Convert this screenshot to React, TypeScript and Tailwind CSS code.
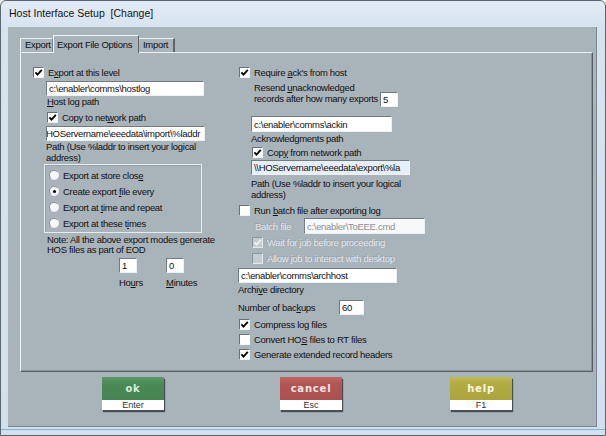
import React from "react";

const Cb = ({ on, dis }: { on?: boolean; dis?: boolean }) => (
  <span
    className={
      dis
        ? "relative block w-[11px] h-[11px] shrink-0 bg-[#c5ccd0] border border-t-[#8d969b] border-l-[#8d969b] border-b-[#e4e8ea] border-r-[#e4e8ea]"
        : "relative block w-[11px] h-[11px] shrink-0 bg-white border border-t-[#6a7277] border-l-[#6a7277] border-b-[#f2f4f5] border-r-[#f2f4f5]"
    }
  >
    {on && (
      <svg viewBox="0 0 9 9" className="absolute left-0 top-0 w-[9px] h-[9px]">
        <path d="M1.4 4.3 L3.5 6.6 L7.8 1.9" fill="none" stroke={dis ? "#eef1f2" : "#000"} strokeWidth="1.8" />
      </svg>
    )}
  </span>
);

const CbRow = ({
  on,
  dis,
  cls,
  children,
}: {
  on?: boolean;
  dis?: boolean;
  cls: string;
  children: React.ReactNode;
}) => (
  <div className={`flex items-center h-[12px] ${cls}`}>
    <Cb on={on} dis={dis} />
    <span
      className={
        dis
          ? "ml-[4px] whitespace-nowrap text-[#e2e7ea] [text-shadow:-1px_-1px_0_rgba(110,120,126,0.35)]"
          : "ml-[4px] whitespace-nowrap"
      }
    >
      {children}
    </span>
  </div>
);

const Radio = ({ on, children }: { on?: boolean; children: React.ReactNode }) => (
  <div className="flex items-center h-[16px] pl-[4px]">
    <span className="relative block w-[10px] h-[10px] rounded-full bg-[#f7f8f9] border border-t-[#8d959a] border-l-[#8d959a] border-b-[#e9edef] border-r-[#e9edef] shrink-0">
      {on && <span className="absolute left-[2.5px] top-[2.5px] w-[3px] h-[3px] rounded-full bg-black" />}
    </span>
    <span className="ml-[4px] whitespace-nowrap">{children}</span>
  </div>
);

const Field = ({ cls, children }: { cls: string; children: React.ReactNode }) => (
  <div
    className={`flex items-center overflow-hidden whitespace-nowrap border border-t-[#737b81] border-l-[#737b81] border-b-[#eef1f2] border-r-[#eef1f2] pl-[2px] ${cls}`}
  >
    {children}
  </div>
);

const Btn = ({
  label,
  sub,
  top,
  ml,
}: {
  label: string;
  sub: string;
  top: string;
  ml: string;
}) => (
  <div className={`w-[62px] flex flex-col shadow-[1px_2px_1px_rgba(40,45,50,0.75)] ${ml}`}>
    <div
      className={`h-[23px] flex items-center justify-center text-[10px] font-bold tracking-[0.8px] font-['DejaVu_Sans',sans-serif] ${top}`}
    >
      {label}
    </div>
    <div className="h-[10px] bg-white text-[9px] leading-[10px] text-center text-[#333]">{sub}</div>
  </div>
);

export default function App() {
  return (
    <div className="w-[606px] h-[436px] relative overflow-hidden rounded-t-[6px] border border-[#5a6772] bg-[linear-gradient(180deg,#e3ecf4_0%,#d6e3ef_6%,#d2dfec_100%)] font-['Liberation_Sans',Arial,sans-serif] text-[#111]">
      <div className="h-[26px] flex items-center pl-[8px] text-[10.5px] text-[#151515]">
        Host Interface Setup&nbsp;&nbsp;[Change]
      </div>
      <div className="ml-[7px] w-[589px] h-[400px] bg-[#a9b3ba] pt-[7px] pl-[12px] border-r border-b border-[#7b868e]">
        {/* tabs */}
        <div className="flex items-end h-[18px] text-[9.5px] tracking-[-0.3px]">
          <div className="h-[14px] w-[33px] pl-[4px] flex items-center border-t border-l border-[#eef2f4] border-r border-r-[#7a848a]">
            Export
          </div>
          <div className="relative z-10 h-[18px] mb-[-1px] w-[86px] pl-[3px] pt-[2px] bg-[#a9b3ba] border-t border-l border-[#f1f4f6] border-r border-r-[#5d656b]">
            Export File Options
          </div>
          <div className="h-[14px] w-[36px] pl-[4px] flex items-center border-t border-[#eef2f4] border-r-2 border-r-[#5d656b]">
            Import
          </div>
        </div>
        {/* panel */}
        <div className="w-[573px] h-[320px] border-t border-l border-[#eef2f4] border-r border-b border-r-[#555d63] border-b-[#555d63] shadow-[inset_-1px_-1px_0_#8b949a] pt-[13px] pl-[12px] flex text-[9.5px] leading-[11px] tracking-[-0.3px]">
          {/* left column */}
          <div className="w-[204px] flex flex-col">
            <CbRow on cls="">
              E<u>x</u>port at this level
            </CbRow>
            <Field cls="mt-[3px] ml-[13px] w-[158px] h-[15px] bg-white">{"c:\\enabler\\comms\\hostlog"}</Field>
            <div className="h-[11px] ml-[14px] leading-[11px]">
              <u>H</u>ost log path
            </div>
            <CbRow on cls="mt-[4px] ml-[14px]">
              Copy to net<u>w</u>ork path
            </CbRow>
            <Field cls="mt-[3px] ml-[13px] w-[159px] h-[15px] bg-white">
              <span className="ml-[-3px]">{"HOServername\\eeedata\\import\\%laddr"}</span>
            </Field>
            <div className="ml-[13px] leading-[11px]">
              Path (Use %laddr to insert your logical
              <br />
              address)
            </div>
            <div className="mt-[1px] ml-[11px] w-[158px] h-[69px] border border-[#e6ebee] shadow-[inset_1px_1px_0_#98a2a8] pt-[2px]">
              <Radio>
                Export at store clos<u>e</u>
              </Radio>
              <Radio on>
                Create export <u>f</u>ile every
              </Radio>
              <Radio>
                Export at <u>t</u>ime and repeat
              </Radio>
              <Radio>
                Export at these t<u>i</u>mes
              </Radio>
            </div>
            <div className="mt-[2px] ml-[14px] leading-[10px] whitespace-nowrap">
              Note: All the above export modes generate
              <br />
              HOS files as part of EOD
            </div>
            <div className="flex mt-[3px]">
              <Field cls="ml-[86px] w-[18px] h-[15px] bg-white">1</Field>
              <Field cls="ml-[29px] w-[18px] h-[15px] bg-white">0</Field>
            </div>
            <div className="flex mt-[4px] h-[11px]">
              <span className="ml-[86px] w-[47px]">
                Ho<u>u</u>rs
              </span>
              <span>
                <u>M</u>inutes
              </span>
            </div>
          </div>
          {/* right column */}
          <div className="flex flex-col">
            <CbRow on cls="ml-[2px]">
              Require <u>a</u>ck's from host
            </CbRow>
            <div className="flex mt-[4px] ml-[17px] h-[25px]">
              <div className="w-[126px] leading-[11px] whitespace-nowrap">
                Resend <u>u</u>nacknowledged
                <br />
                records after how many exports
              </div>
              <Field cls="mt-[10px] w-[18px] h-[15px] bg-white">5</Field>
            </div>
            <Field cls="mt-[9px] ml-[14px] w-[141px] h-[16px] bg-white">{"c:\\enabler\\comms\\ackin"}</Field>
            <div className="mt-[1px] ml-[14px] h-[11px]">Acknowledgments path</div>
            <CbRow on cls="mt-[2px] ml-[15px]">
              Cop<u>y</u> from network path
            </CbRow>
            <Field cls="mt-[2px] ml-[14px] w-[159px] h-[15px] bg-[#e6eef8]">
              {"\\\\HOServername\\eeedata\\export\\%la"}
            </Field>
            <div className="mt-[3px] ml-[14px] leading-[11px]">
              Path (Use %laddr to insert your logical
              <br />
              address)
            </div>
            <CbRow cls="mt-[4px] ml-[2px]">
              Run <u>b</u>atch file after exporting log
            </CbRow>
            <div className="flex items-center mt-[2px] h-[16px]">
              <span className="ml-[18px] w-[49px] text-[#e2e7ea] [text-shadow:-1px_-1px_0_rgba(110,120,126,0.35)]">
                Batch file
              </span>
              <Field cls="w-[121px] h-[16px] bg-[#f7f8f9] text-[#8a9298]">{"c:\\enabler\\ToEEE.cmd"}</Field>
            </div>
            <CbRow on dis cls="mt-[2px] ml-[15px]">
              Wait for <u>j</u>ob before proceeding
            </CbRow>
            <CbRow dis cls="mt-[4px] ml-[15px]">
              Allow job to interact with desktop
            </CbRow>
            <Field cls="mt-[4px] ml-[1px] w-[159px] h-[15px] bg-white">{"c:\\enabler\\comms\\archhost"}</Field>
            <div className="mt-[1px] ml-[1px] h-[11px]">
              Archi<u>v</u>e directory
            </div>
            <div className="flex items-center mt-[5px] h-[15px]">
              <span className="ml-[1px] w-[101px]">
                Number of bac<u>k</u>ups
              </span>
              <Field cls="w-[25px] h-[15px] bg-white">60</Field>
            </div>
            <CbRow on cls="mt-[3px] ml-[2px]">
              Compress log files
            </CbRow>
            <CbRow cls="mt-[3px] ml-[2px]">
              Convert HO<u>S</u> files to RT files
            </CbRow>
            <CbRow on cls="mt-[3px] ml-[2px]">
              Generate extended record headers
            </CbRow>
          </div>
        </div>
        {/* buttons */}
        <div className="flex mt-[5px]">
          <Btn
            label="ok"
            sub="Enter"
            ml="ml-[82px]"
            top="bg-[linear-gradient(180deg,#5a9a66_0%,#4a8a57_30%,#468553_100%)] text-[#d8eed9]"
          />
          <Btn
            label="cancel"
            sub="Esc"
            ml="ml-[116px]"
            top="bg-[linear-gradient(180deg,#c06565_0%,#b15555_30%,#ab5050_100%)] text-[#f6e2e2]"
          />
          <Btn
            label="help"
            sub="F1"
            ml="ml-[108px]"
            top="bg-[linear-gradient(180deg,#c0ba52_0%,#b2ab43_30%,#aca53f_100%)] text-[#f8f6dc]"
          />
        </div>
      </div>
      <div className="absolute left-0 right-0 bottom-[5px] h-[1px] bg-[#7fb4d8]" />
    </div>
  );
}
